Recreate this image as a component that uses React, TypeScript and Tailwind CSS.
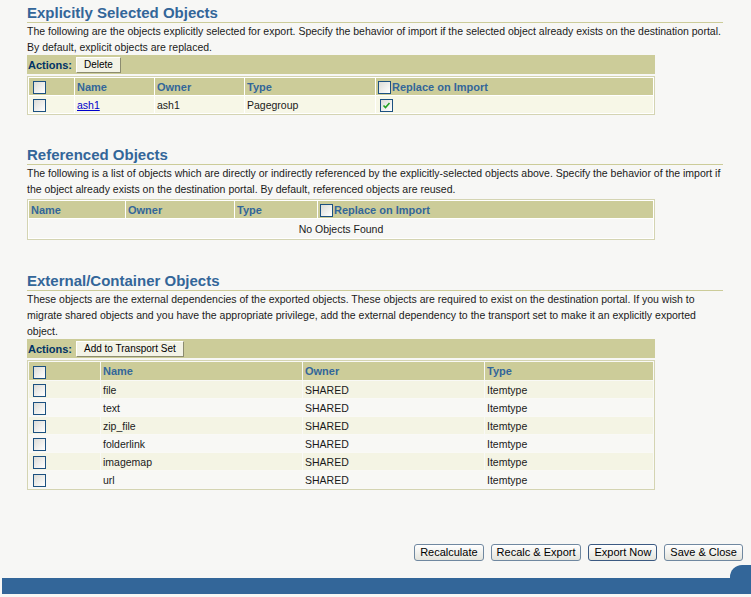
import React from "react";

const font = "font-['Liberation_Sans',Arial,sans-serif]";

function Checkbox({ checked = false }: { checked?: boolean }) {
  return (
    <span className="inline-block relative w-[13px] h-[13px] border border-[#1c5180] bg-linear-to-br from-[#dcdcd7] to-white align-middle">
      {checked && (
        <svg viewBox="0 0 11 11" className="absolute inset-0 w-[11px] h-[11px]">
          <path d="M2.5 5.5 L4.5 7.5 L8.5 3" fill="none" stroke="#21a121" strokeWidth="1.6" />
        </svg>
      )}
    </span>
  );
}

function SectionHead({ title }: { title: string }) {
  return (
    <h2 className="text-[15px] leading-[19px] font-bold text-[#336699] border-b border-[#cccc99]">
      {title}
    </h2>
  );
}

function ActionsBar({ label }: { label: string }) {
  return (
    <div className="w-[628px] h-[19px] bg-[#cccc99] flex items-center gap-[4px]">
      <span className="pl-[1px] text-[11px] font-bold text-[#003366]">Actions:</span>
      <button className="h-[16px] px-[7px] text-[10px] leading-[14px] bg-[#f3f3e6] border border-t-white border-l-white border-b-[#8c8c70] border-r-[#8c8c70] text-black">
        {label}
      </button>
    </div>
  );
}

const th = "h-[17px] bg-[#cccc99] text-left text-[11px] font-bold text-[#336699] px-[2px] py-0 align-middle";
const td = "h-[17px] px-[2px] py-0 align-middle text-[#1a1a1a]";

const external = ["file", "text", "zip_file", "folderlink", "imagemap", "url"];

export default function App() {
  return (
    <div className={`${font} min-h-[597px] bg-[#f7f7f5] text-[10.5px] leading-[16px] text-[#1a1a1a] flex flex-col`}>
      <div className="pl-[27px] pr-[28px] pt-[3px]">
        {/* Explicitly selected */}
        <SectionHead title="Explicitly Selected Objects" />
        <p>
          The following are the objects explicitly selected for export. Specify the behavior of import if the selected
          object already exists on the destination portal. By default, explicit objects are replaced.
        </p>
        <ActionsBar label="Delete" />
        <div className="mt-[2px] w-[628px] border border-[#d4d4b2] bg-white">
          <table className="w-full border-separate border-spacing-x-[1px] border-spacing-y-[1px]">
            <thead>
              <tr>
                <th className={`${th} w-[45px] pl-[4px]`}>
                  <Checkbox />
                </th>
                <th className={`${th} w-[79px]`}>Name</th>
                <th className={`${th} w-[89px]`}>Owner</th>
                <th className={`${th} w-[130px]`}>Type</th>
                <th className={th}>
                  <Checkbox />
                  <span className="ml-[1px] align-middle">Replace on Import</span>
                </th>
              </tr>
            </thead>
            <tbody>
              <tr className="bg-[#f7f7e7]">
                <td className={`${td} pl-[4px]`}>
                  <Checkbox />
                </td>
                <td className={td}>
                  <a href="#" className="text-[#0000cc] underline">ash1</a>
                </td>
                <td className={td}>ash1</td>
                <td className={td}>Pagegroup</td>
                <td className={`${td} pl-[4px]`}>
                  <Checkbox checked />
                </td>
              </tr>
            </tbody>
          </table>
        </div>

        {/* Referenced */}
        <div className="mt-[30px]">
          <SectionHead title="Referenced Objects" />
        </div>
        <p>
          The following is a list of objects which are directly or indirectly referenced by the explicitly-selected
          objects above. Specify the behavior of the import if the object already exists on the destination portal. By
          default, referenced objects are reused.
        </p>
        <div className="mt-[2px] w-[628px] border border-[#d4d4b2] bg-[#f7f7f5]">
          <table className="w-full border-separate border-spacing-x-[1px] border-spacing-y-[1px] bg-white">
            <thead>
              <tr>
                <th className={`${th} w-[96px]`}>Name</th>
                <th className={`${th} w-[108px]`}>Owner</th>
                <th className={`${th} w-[82px]`}>Type</th>
                <th className={th}>
                  <Checkbox />
                  <span className="ml-[1px] align-middle">Replace on Import</span>
                </th>
              </tr>
            </thead>
            <tbody>
              <tr className="bg-[#f7f7f5]">
                <td colSpan={4} className={`${td} h-[19px] text-center`}>
                  No Objects Found
                </td>
              </tr>
            </tbody>
          </table>
        </div>

        {/* External */}
        <div className="mt-[31px]">
          <SectionHead title="External/Container Objects" />
        </div>
        <p>
          These objects are the external dependencies of the exported objects. These objects are required to exist on
          the destination portal. If you wish to migrate shared objects and you have the appropriate privilege, add the
          external dependency to the transport set to make it an explicitly exported object.
        </p>
        <ActionsBar label="Add to Transport Set" />
        <div className="mt-[2px] w-[628px] border border-[#d4d4b2] bg-white">
          <table className="w-full border-separate border-spacing-x-[1px] border-spacing-y-[1px] bg-[#f9f9f6]">
            <thead>
              <tr>
                <th className={`${th} h-[18px] w-[71px] pl-[4px]`}>
                  <Checkbox />
                </th>
                <th className={`${th} w-[201px]`}>Name</th>
                <th className={`${th} w-[181px]`}>Owner</th>
                <th className={th}>Type</th>
              </tr>
            </thead>
            <tbody>
              {external.map((name, i) => (
                <tr key={name} className={i % 2 === 0 ? "bg-[#f4f4e4]" : "bg-[#f8f8f5]"}>
                  <td className={`${td} h-[17.4px] pl-[4px]`}>
                    <Checkbox />
                  </td>
                  <td className={td}>{name}</td>
                  <td className={td}>SHARED</td>
                  <td className={td}>Itemtype</td>
                </tr>
              ))}
            </tbody>
          </table>
        </div>
      </div>

      {/* Footer buttons */}
      <div className="mt-auto flex justify-end gap-[7px] pr-[8px]">
        {["Recalculate", "Recalc & Export", "Export Now", "Save & Close"].map((b) => (
          <button
            key={b}
            className={`h-[17px] px-[5px] text-[11px] leading-[15px] rounded-[3px] border ${
              b === "Export Now" ? "border-[#3c5a82]" : "border-[#7088a0]"
            } bg-linear-to-b from-white to-[#e4e4dc] text-black`}
          >
            {b}
          </button>
        ))}
      </div>
      <div className="mt-[4px] ml-[2px] flex items-end">
        <div className="flex-1 h-[16px] bg-[#336699]" />
        <div className="w-[21px] h-[29px] bg-[#336699] rounded-tl-[12px]" />
      </div>
      <div className="h-[3px]" />
    </div>
  );
}
